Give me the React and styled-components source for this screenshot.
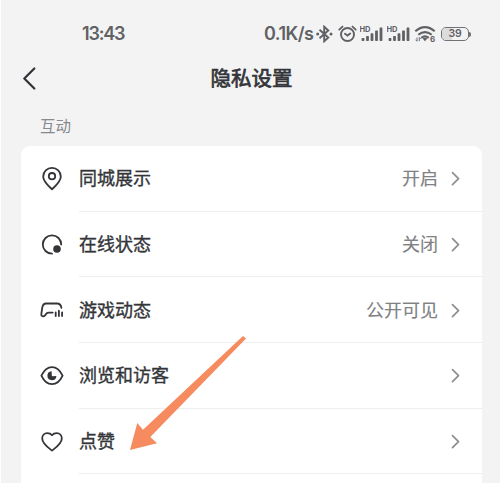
import React from "react";
import styled, { createGlobalStyle } from "styled-components";

const rows = [
    { icon: "pin", label: "同城展示", value: "开启" },
    { icon: "online", label: "在线状态", value: "关闭" },
    { icon: "game", label: "游戏动态", value: "公开可见" },
    { icon: "eye", label: "浏览和访客" },
    { icon: "heart", label: "点赞" },
];

const icons = {
    pin: (
        <>
            <path d="M12 22.300C8.200 18.500 3.200 14.700 3.200 9.500a8.800 8.600 0 0 1 17.600 0C20.800 14.700 15.800 18.500 12 22.300z" />
            <circle cx="12" cy="9.200" r="3.200" />
        </>
    ),
    online: (
        <>
            <path d="M12 20.700A9.200 9.200 0 1 1 21.200 11.500" />
            <circle cx="17" cy="16" r="3.800" fill="#333539" stroke="none" />
        </>
    ),
    game: (
        <>
            <path d="M21.400 9.800C20.900 6.500 19.700 5.500 17 5.500H6.200C3.300 5.500 2.600 7 2.200 9.900L1.300 16.300C1.100 18.400 3.500 19 5 17.300L6.600 15.400C7.200 14.800 7.800 14.600 8.700 14.600H12.700" />
            <path d="M15.700 14.500v3.500M18.900 12.700v5.300M22.100 14.500v3.500" />
        </>
    ),
    eye: (
        <>
            <path d="M1.400 11.600C4 6.200 7.700 3.100 12 3.100S20 6.200 22.600 11.600C20 17.200 16.300 20.200 12 20.200S4 17.200 1.400 11.600z" />
            <path d="M11.600 7.200A4.500 4.500 0 1 0 16.400 12L12.800 12.300Q11.600 12.200 11.800 11z" fill="#333539" stroke="none" />
        </>
    ),
    heart: (
        <path d="M12 20.600C8.500 18 2.200 13.700 2.200 8.500C2.200 5.300 4.500 3.100 7.200 3.100C9.300 3.100 11 3.900 12 5.200C13 3.900 14.700 3.100 16.800 3.100C19.500 3.100 21.800 5.300 21.800 8.500C21.800 13.700 15.500 18 12 20.600z" />
    ),
};

const Signal = () => (
    <svg width="23" height="18" viewBox="0 0 23 18" fill="#606164">
        <HdText x="-0.500" y="6.800">HD</HdText>
        <rect x="1.600" y="13" width="2.800" height="3" rx="0.700" />
        <rect x="6.100" y="11" width="2.800" height="5" rx="0.700" />
        <rect x="10.600" y="8.200" width="2.800" height="7.800" rx="0.700" />
        <rect x="15.100" y="5.400" width="2.800" height="10.600" rx="0.700" />
        <rect x="19.600" y="2.400" width="2.800" height="13.600" rx="0.700" />
    </svg>
);

const App = () => {
    return (
        <Screen>
            <GlobalStyle />
            <StatusBar>
                <Time>13:43</Time>
                <Speed>0.1K/s</Speed>
                <StatusIcons>
                    <svg width="18" height="18" viewBox="0 0 18 18" fill="none" stroke="#606164" strokeWidth="1.900">
                        <path d="M4.500 4.800L13.300 12.500L9.200 16.300V1.700L13.300 5.500L4.500 13.200" />
                        <circle cx="2.700" cy="9" r="1.500" fill="#606164" stroke="none" />
                        <circle cx="16" cy="9" r="1.500" fill="#606164" stroke="none" />
                    </svg>
                    <Alarm width="20" height="18" viewBox="0 0 20 18" fill="none" stroke="#606164" strokeWidth="1.900" strokeLinecap="round">
                        <circle cx="10.500" cy="9.500" r="6.500" />
                        <path d="M8 8.800L10.500 10.500L13.200 8.500M2.300 4.600L5.500 1.600M15.500 1.600L18.700 4.600" />
                    </Alarm>
                    <Signal />
                    <Signal />
                    <svg width="22" height="18" viewBox="0 0 22 18" fill="none" stroke="#606164" strokeWidth="2.100">
                        <path d="M1.300 6.200Q11 -2 20.700 6.200M4.300 9.800Q11 4.300 17.700 9.800M7.300 12.800Q11 9.900 14.700 12.800" />
                        <path d="M8.600 13.600Q11 12 13.400 13.600L11 16.200z" fill="#606164" stroke="none" />
                        <path d="M3 12.500v3.700M1.500 14.700l1.500 1.500M5.300 16.200v-3.700M5.300 12.500L6.800 14" strokeWidth="0.900" />
                        <WifiText x="16" y="16.500">6</WifiText>
                    </svg>
                    <Battery>
                        <Level />
                        <Percent>39</Percent>
                    </Battery>
                    <BatteryCap />
                </StatusIcons>
            </StatusBar>
            <Header>
                <svg width="16" height="24" viewBox="0 0 16 24" fill="none" stroke="#303236" strokeWidth="2.200" strokeLinecap="round" strokeLinejoin="round">
                    <path d="M13.300 2.500L3.300 12.500L13.300 22.500" />
                </svg>
                <Title>隐私设置</Title>
            </Header>
            <SectionName>互动</SectionName>
            <Card>
                {rows.map((row) => {
                    return (
                        <Row key={row.label}>
                            <RowIcon viewBox="0 0 24 24">{icons[row.icon]}</RowIcon>
                            <RowBody>
                                <Label>{row.label}</Label>
                                {row.value && <Value>{row.value}</Value>}
                                <Chevron viewBox="0 0 10 16">
                                    <path d="M1.500 2.700L7.500 8.700L1.500 14.700" />
                                </Chevron>
                            </RowBody>
                        </Row>
                    );
                })}
            </Card>
            <Arrow viewBox="0 0 118 116">
                <polygon points="1,115 8.300,88 14,94.700 114,1 117,3.500 21.300,102 28,108.300" />
            </Arrow>
        </Screen>
    );
};

const GlobalStyle = createGlobalStyle`
    * {
        box-sizing: border-box;
    }

    body {
        margin: 0;
        overflow: hidden;
    }

    svg {
        display: block;
        flex: none;
    }
`;

const Screen = styled.div`
    position: relative;
    display: flex;
    flex-direction: column;
    width: 500px;
    height: 483px;
    overflow: hidden;
    border-left: 1px solid #fff;
    background: #f3f3f4;
    font-family: "Noto Sans CJK SC", sans-serif;
    color: #333539;
`;

const StatusBar = styled.div`
    display: flex;
    align-items: center;
    height: 52px;
    padding: 16px 0 0 81px;
    flex: none;
    font-family: Inter, sans-serif;
    font-weight: 600;
    font-size: 18px;
    line-height: 24px;
    color: #606164;
`;

const Time = styled.span`
    width: 182px;
    letter-spacing: -1.2px;
`;

const Speed = styled.span`
    width: 51px;
    white-space: nowrap;
    letter-spacing: -0.5px;
`;

const StatusIcons = styled.div`
    display: flex;
    align-items: center;
    gap: 4px;
`;

const Alarm = styled.svg`
    margin-right: -1px;
`;

const HdText = styled.text`
    font: 700 7.5px Inter, sans-serif;
`;

const WifiText = styled.text`
    font: 700 8px Inter, sans-serif;
    fill: #606164;
    stroke: none;
`;

const Battery = styled.div`
    position: relative;
    display: flex;
    align-items: center;
    justify-content: center;
    width: 28px;
    height: 14px;
    margin-left: 1px;
    border: 1.5px solid #707174;
    border-radius: 5px;
    overflow: hidden;
`;

const Level = styled.div`
    position: absolute;
    left: 0;
    top: 0;
    bottom: 0;
    width: 39%;
    background: #dcdcdd;
`;

const Percent = styled.span`
    position: relative;
    font-size: 10.5px;
    line-height: 12px;
    letter-spacing: -0.3px;
`;

const BatteryCap = styled.div`
    width: 2px;
    height: 5px;
    margin-left: -4px;
    border-radius: 0 2px 2px 0;
    background: #707174;
`;

const Header = styled.div`
    display: grid;
    grid-template-columns: 20px 1fr 20px;
    align-items: center;
    height: 52px;
    padding: 0 18px 0 20px;
    flex: none;
`;

const Title = styled.h1`
    margin: -2px 0 0;
    font-size: 20.5px;
    line-height: 30px;
    font-weight: 400;
    -webkit-text-stroke: 0.7px currentColor;
    text-align: center;
`;

const SectionName = styled.div`
    height: 42px;
    padding: 9px 0 0 39px;
    flex: none;
    font-size: 15.500px;
    line-height: 24px;
    color: #88898c;
`;

const Card = styled.div`
    width: 461px;
    height: 360px;
    margin-left: 20px;
    flex: none;
    border-radius: 9px 9px 0 0;
    background: #fff;
`;

const Row = styled.div`
    display: flex;
    align-items: center;
    height: 65.700px;
    padding-left: 19px;
`;

const RowIcon = styled.svg`
    width: 24px;
    height: 24px;
    margin-right: 15px;
    fill: none;
    stroke: #333539;
    stroke-width: 1.800;
    stroke-linecap: round;
    stroke-linejoin: round;
`;

const RowBody = styled.div`
    display: flex;
    align-items: center;
    flex: 1;
    height: 100%;
    padding-right: 21px;
    border-bottom: 1px solid #eeeeef;
`;

const Label = styled.span`
    flex: 1;
    margin-top: -2px;
    font-size: 18px;
    line-height: 26px;
    -webkit-text-stroke: 0.35px currentColor;
`;

const Value = styled.span`
    margin: -2px 13px 0 0;
    font-size: 18px;
    line-height: 26px;
    color: #808184;
    -webkit-text-stroke: 0.15px currentColor;
`;

const Chevron = styled.svg`
    width: 10px;
    height: 16px;
    fill: none;
    stroke: #8e8f92;
    stroke-width: 1.700;
    stroke-linecap: round;
    stroke-linejoin: round;
`;

const Arrow = styled.svg`
    position: absolute;
    left: 128px;
    top: 335px;
    width: 118px;
    height: 116px;
    fill: #f58b5e;
`;

export default App;
